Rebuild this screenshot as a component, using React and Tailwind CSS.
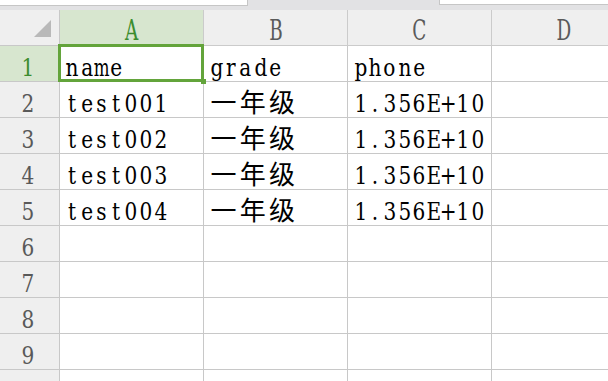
const COLS = ['A', 'B', 'C', 'D'];

const DATA = [
  ['name', 'grade', 'phone'],
  ['test001', '一年级', '1.356E+10'],
  ['test002', '一年级', '1.356E+10'],
  ['test003', '一年级', '1.356E+10'],
  ['test004', '一年级', '1.356E+10'],
  ['', '', ''],
  ['', '', ''],
  ['', '', ''],
  ['', '', ''],
  ['', '', ''],
];

const isCjk = (ch) => ch.charCodeAt(0) > 0x2e80;
const WIDE = 'mwMW';

// fixed-pitch cells, half width for latin and full width for CJK, like the sheet's default font
function CellText({ text }) {
  if (!text) return null;
  const cjk = [...text].some(isCjk);
  return (
    <div
      className={`flex pl-[5px] text-black ${
        cjk
          ? 'pt-[4.5px] [font-family:Noto_Sans_CJK_SC,sans-serif] text-[26px] leading-[27px]'
          : 'pt-[8px] [font-family:DejaVu_Serif,serif] text-[24.5px] leading-[27px]'
      }`}
    >
      {[...text].map((ch, i) =>
        isCjk(ch) ? (
          <span key={i} className="w-[29.2px] text-center">
            {ch}
          </span>
        ) : (
          <span key={i} className="w-[14.7px] flex justify-center">
            <span className={WIDE.includes(ch) ? 'inline-block scale-x-[0.68]' : 'inline-block scale-x-[0.82]'}>{ch}</span>
          </span>
        )
      )}
    </div>
  );
}

function Corner() {
  return (
    <div className="h-[36px] bg-[#efefef] border-r border-b border-[#c8c8c8] relative">
      <svg className="absolute left-[34px] top-[10px]" width="18" height="18" viewBox="0 0 18 18">
        <polygon points="17,0 17,17 0,17" fill="#b9b9b9" />
      </svg>
    </div>
  );
}

export default function App() {
  return (
    <div className="w-[608px] h-[381px] overflow-hidden bg-white relative [font-family:DejaVu_Serif,serif]">
      <div className="h-[10px] bg-[#e2e2e4] flex justify-between">
        <div className="w-[248px] h-[6px] bg-white border-r border-b border-[#c6c6c6]" />
        <div className="w-[169px] h-[5px] bg-white border-l border-b border-[#c6c6c6]" />
      </div>

      <div className="grid grid-cols-[60px_144px_144px_144px_144px] w-max">
        <Corner />
        {COLS.map((c) => (
          <div
            key={c}
            className={`h-[36px] border-r border-b border-[#cbcbcb] text-center pt-[7px] text-[27px] leading-[28px] ${
              c === 'A' ? 'bg-[#d7e6cf] text-[#3b8d2f]' : 'bg-[#efefef] text-[#5a5a5a]'
            }`}
          >
            <span className="inline-block scale-x-[0.68]">{c}</span>
          </div>
        ))}

        {DATA.map((row, r) => (
          <div key={r} className="contents">
            <div
              className={`h-[36px] border-r border-b border-[#c8c8c8] text-center pr-[4px] pt-[8px] text-[24.5px] leading-[27px] ${
                r === 0 ? 'bg-[#d7e6cf] text-[#3b8d2f]' : 'bg-[#efefef] text-[#595959]'
              }`}
            >
              <span className="inline-block scale-x-[0.82]">{r + 1}</span>
            </div>
            {row.map((cell, c) => (
              <div key={c} className="h-[36px] border-r border-b border-[#c8c8c8] overflow-visible whitespace-nowrap">
                <CellText text={cell} />
              </div>
            ))}
            <div className="h-[36px] border-r border-b border-[#c8c8c8]" />
          </div>
        ))}
      </div>

      <div className="absolute left-[58px] top-[44px] w-[146px] h-[38px] border-[3px] border-[#63a43b]" />
      <div className="absolute left-[201px] top-[79px] w-[5px] h-[5px] bg-[#63a43b]" />
    </div>
  );
}
